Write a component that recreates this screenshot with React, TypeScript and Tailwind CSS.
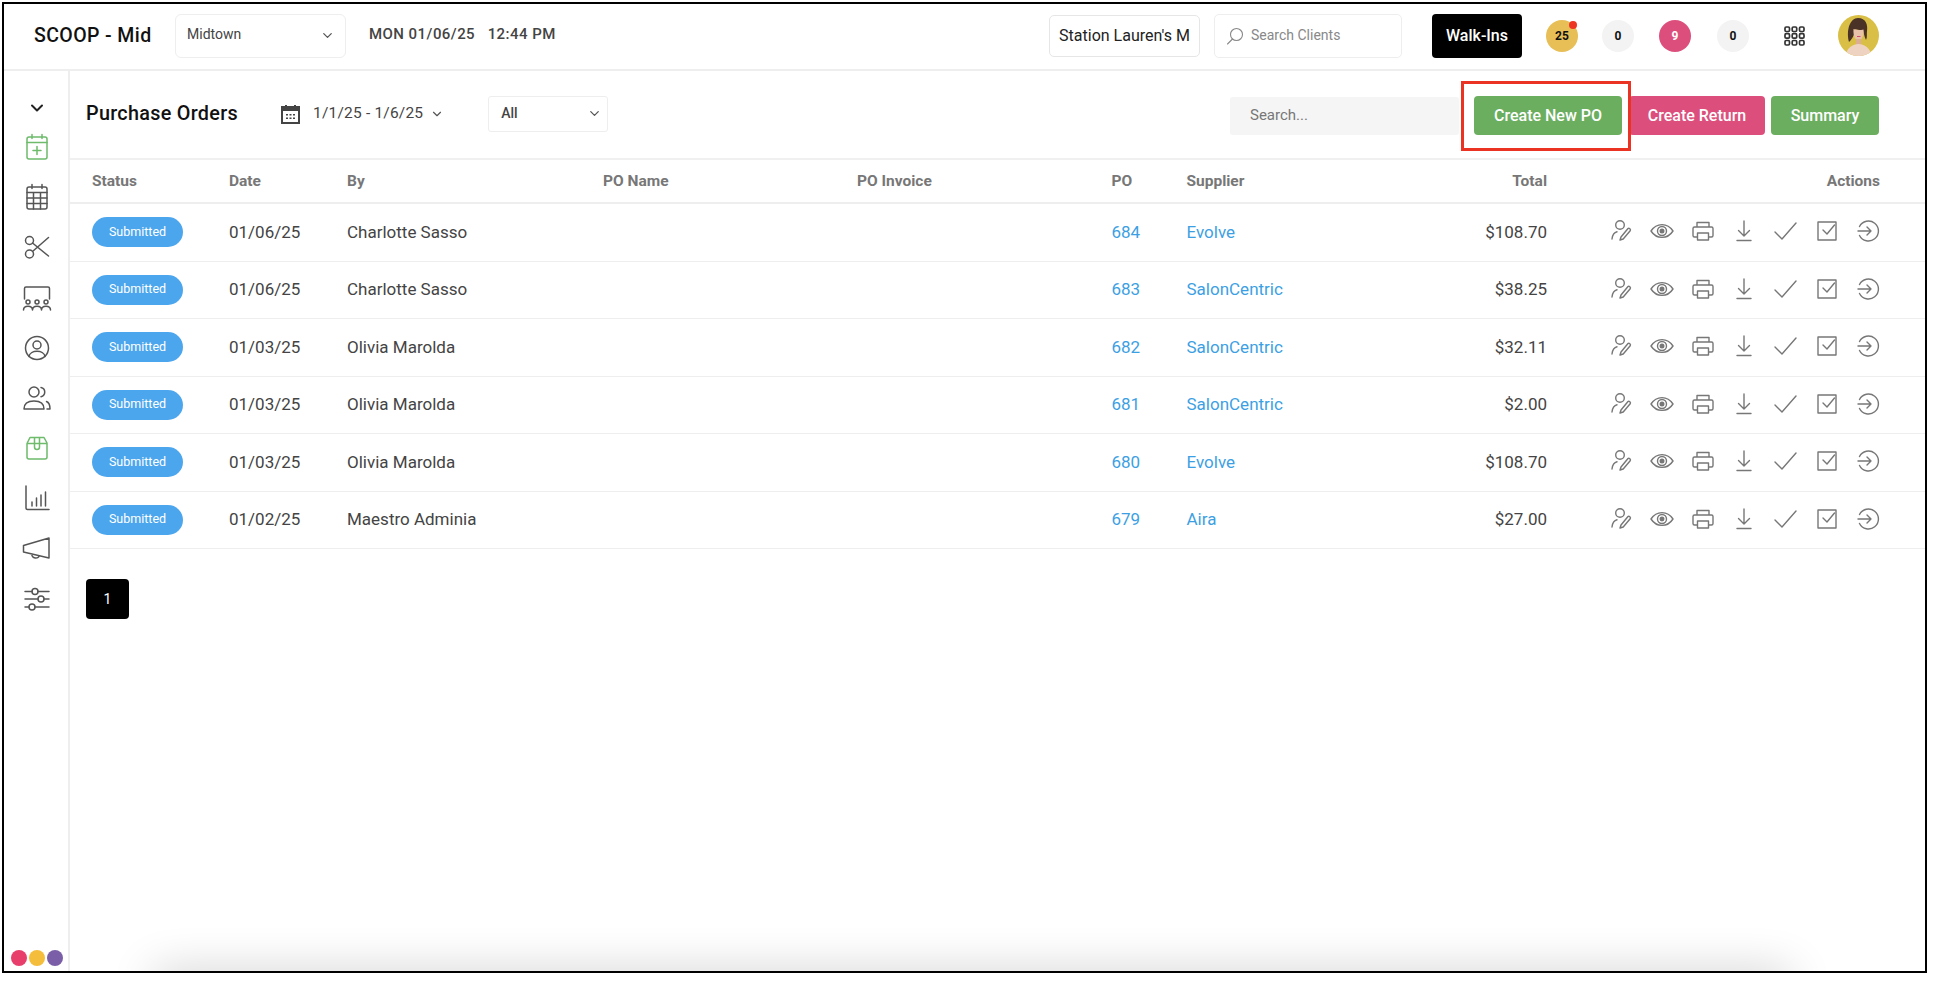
import { ChevronDown } from "lucide-react";

const rows = [
  { date: "01/06/25", by: "Charlotte Sasso", po: "684", supplier: "Evolve", total: "$108.70" },
  { date: "01/06/25", by: "Charlotte Sasso", po: "683", supplier: "SalonCentric", total: "$38.25" },
  { date: "01/03/25", by: "Olivia Marolda", po: "682", supplier: "SalonCentric", total: "$32.11" },
  { date: "01/03/25", by: "Olivia Marolda", po: "681", supplier: "SalonCentric", total: "$2.00" },
  { date: "01/03/25", by: "Olivia Marolda", po: "680", supplier: "Evolve", total: "$108.70" },
  { date: "01/02/25", by: "Maestro Adminia", po: "679", supplier: "Aira", total: "$27.00" },
];

function SideIcon({ children, color = "#555" }: { children: React.ReactNode; color?: string }) {
  return (
    <div className="h-[50.2px] flex items-center justify-center">
      <svg width="32" height="32" viewBox="0 0 32 32" fill="none" stroke={color} strokeWidth="1.5" strokeLinecap="round" strokeLinejoin="round">
        {children}
      </svg>
    </div>
  );
}

function Sidebar() {
  return (
    <aside className="w-[66px] shrink-0 border-r-2 border-[#eeeeee] relative flex flex-col pt-[25px] pl-[2px]">
      <div className="h-[24px] flex items-center justify-center mb-[2px]">
        <ChevronDown size={20} strokeWidth={2.4} color="#222" />
      </div>
      <SideIcon color="#6dbb6b">
        <rect x="6" y="6" width="20" height="22" rx="2" />
        <path d="M6 11.5h20M11 3.5v4M21 3.5v4M16 15.5v8M12 19.5h8" />
      </SideIcon>
      <SideIcon>
        <rect x="6" y="6" width="20" height="22" rx="2" />
        <path d="M6 11.5h20M11 3.5v4M21 3.5v4M6 17h20M6 22.5h20M12.5 11.5V28M19.5 11.5V28" />
      </SideIcon>
      <SideIcon>
        <circle cx="8.5" cy="9.5" r="4" />
        <circle cx="8.5" cy="23" r="4" />
        <path d="M11.5 12L27.5 25M11.5 20.5L27.5 6.5" />
      </SideIcon>
      <SideIcon>
        <path d="M3.5 17V6.5a1.5 1.5 0 0 1 1.5-1.5h22a1.5 1.5 0 0 1 1.5 1.5V17" />
        <circle cx="7" cy="20" r="2" />
        <circle cx="16" cy="20" r="2" />
        <circle cx="25" cy="20" r="2" />
        <path d="M2.5 28c0-5 9-5 9 0M11.5 28c0-5 9-5 9 0M20.5 28c0-5 9-5 9 0" />
      </SideIcon>
      <SideIcon>
        <circle cx="16" cy="16" r="11.5" />
        <circle cx="16" cy="13" r="4" />
        <path d="M8 24.5c1-7 15-7 16 0" />
      </SideIcon>
      <SideIcon>
        <circle cx="13" cy="10" r="5" />
        <path d="M3 27c0-3 .5-8 10-8s10 5 10 8z" />
        <path d="M20 5.5a4.7 4.7 0 0 1 0 9.2M25.5 19.5c2.5 1 3.5 3.5 3.5 7.5h-3" />
      </SideIcon>
      <SideIcon color="#6dbb6b">
        <path d="M6 11.5L9 5.5h14l3 5.5v14a2 2 0 0 1-2 2H8a2 2 0 0 1-2-2zM6 11.5h20M13.5 5.5v9.5a2.5 2.5 0 0 0 5 0V5.5" />
      </SideIcon>
      <SideIcon>
        <path d="M5 4v22a1.5 1.5 0 0 0 1.5 1.5H28M11 24v-4M15.5 24v-8M20 24V13M24.5 24V10" />
      </SideIcon>
      <SideIcon>
        <path d="M2.5 12.5L28 5v20L2.5 19zM11 21c-1 5 7 5 7 2" />
      </SideIcon>
      <SideIcon>
        <path d="M4 8.5h7M17 8.5h11M4 16h13M23 16h5M4 24h4M14 24h14" />
        <circle cx="14" cy="8.5" r="3" />
        <circle cx="20" cy="16" r="3" />
        <circle cx="11" cy="24" r="3" />
      </SideIcon>
      <div className="absolute left-[7px] top-[879px] flex gap-[2px]">
        <span className="w-[16px] h-[16px] rounded-full bg-[#e83e6b]" />
        <span className="w-[16px] h-[16px] rounded-full bg-[#f5bd3c]" />
        <span className="w-[16px] h-[16px] rounded-full bg-[#7b5ea8]" />
      </div>
    </aside>
  );
}

function Avatar() {
  return (
    <svg width="41" height="41" viewBox="0 0 41 41" className="rounded-full">
      <rect width="41" height="41" fill="#d9bf45" />
      <path d="M11 27C8 15 12 3 20 3c8 0 10 7 9 13-.5 3 .5 6-1 9-2-4-2-7-3-10-3 .5-6 0-7.500-1-1 4-2 9-6.500 13z" fill="#4a3226" />
      <path d="M15.5 14c3 1 6 1.500 10 .5.5 6-1.500 11-5 11s-5.500-5.500-5-11.500z" fill="#e9c2aa" />
      <path d="M18 24h5v6h-5z" fill="#dcae96" />
      <path d="M8 41c0-8 7-12 12.500-12S33 33 33 41z" fill="#efd3c2" />
      <path d="M19 21.500h3.500" stroke="#d0506f" strokeWidth="1.200" />
    </svg>
  );
}

function CountDot({ value, className }: { value: string; className: string }) {
  return (
    <div className={`w-[32px] h-[32px] rounded-full flex items-center justify-center text-[12px] font-bold ${className}`}>
      {value}
    </div>
  );
}

function Header() {
  return (
    <header className="h-[67px] shrink-0 border-b-2 border-[#eeeeee] flex items-center pb-[2px]">
      <div className="ml-[30px] w-[141px] text-[19.5px] font-medium text-[#111] tracking-[0.4px] whitespace-nowrap">SCOOP - Mid</div>
      <div className="w-[171px] h-[44px] border border-[#eeeeee] rounded-[6px] flex items-center justify-between pl-[11px] pr-[10px] text-[14px] text-[#444]">
        <span className="mb-[2px]">Midtown</span>
        <ChevronDown size={15} color="#555" />
      </div>
      <div className="ml-[23px] mb-[2px] text-[15px] font-medium text-[#444] tracking-[0.45px] whitespace-pre">MON 01/06/25{"   "}12:44 PM</div>
      <div className="ml-auto w-[151px] h-[42px] border border-[#e6e6e6] rounded-[5px] flex items-center justify-center text-[16px] text-[#222] whitespace-nowrap">
        Station Lauren's M
      </div>
      <div className="ml-[14px] w-[188px] h-[44px] border border-[#eeeeee] rounded-[5px] flex items-center pl-[11px] gap-[7px] text-[14px] text-[#888]">
        <svg width="18" height="18" viewBox="0 0 18 18" fill="none" stroke="#888" strokeWidth="1.1" strokeLinecap="round">
          <circle cx="10.5" cy="7.5" r="6" />
          <path d="M6.5 12L1.5 17" />
        </svg>
        <span>Search Clients</span>
      </div>
      <div className="ml-[30px] w-[90px] h-[44px] bg-black text-white rounded-[4px] flex items-center justify-center text-[16px] font-medium">
        Walk-Ins
      </div>
      <div className="ml-[24px] relative">
        <CountDot value="25" className="bg-[#e8bf57] text-[#111]" />
        <span className="absolute right-[1px] top-[1px] w-[8px] h-[8px] rounded-full bg-[#ee3524]" />
      </div>
      <CountDot value="0" className="ml-[24px] bg-[#f3f3f3] text-[#111]" />
      <CountDot value="9" className="ml-[25px] bg-[#dc4f7d] text-white" />
      <CountDot value="0" className="ml-[26px] bg-[#f3f3f3] text-[#111]" />
      <svg className="ml-[35px]" width="21" height="20" viewBox="0 0 21 20" fill="none" stroke="#333" strokeWidth="1.7">
        <rect x="1" y="1" width="4.5" height="4.5" rx="1.2" />
        <rect x="8.2" y="1" width="4.5" height="4.5" rx="1.2" />
        <rect x="15.5" y="1" width="4.5" height="4.5" rx="1.2" />
        <rect x="1" y="7.7" width="4.5" height="4.5" rx="1.2" />
        <rect x="8.2" y="7.7" width="4.5" height="4.5" rx="1.2" />
        <rect x="15.5" y="7.7" width="4.5" height="4.5" rx="1.2" />
        <rect x="1" y="14.5" width="4.5" height="4.5" rx="1.2" />
        <rect x="8.2" y="14.5" width="4.5" height="4.5" rx="1.2" />
        <rect x="15.5" y="14.5" width="4.5" height="4.5" rx="1.2" />
      </svg>
      <div className="ml-[33px] mr-[46px]"><Avatar /></div>
    </header>
  );
}

function Toolbar() {
  return (
    <div className="h-[89px] shrink-0 border-b-2 border-[#f0f0f0] flex items-center pl-[16px] relative">
      <h1 className="w-[195px] text-[19.8px] font-medium text-[#111] tracking-[0.3px] mb-[2px]">Purchase Orders</h1>
      <svg width="19" height="20" viewBox="0 0 19 20" className="mb-[2px]">
        <path d="M1 3h17v16H1z" fill="none" stroke="#444" strokeWidth="2" />
        <path d="M1 3h17v4H1zM4 1h2v3H4zM13 1h2v3h-2z" fill="#444" />
        <path d="M5 10h2v1.5H5zM8.5 10h2v1.5h-2zM12 10h2v1.5h-2zM5 13.5h2V15H5zM8.5 13.5h2V15h-2zM12 13.5h2V15h-2z" fill="#444" />
      </svg>
      <span className="ml-[13px] text-[15.5px] text-[#444] tracking-[0.2px] mb-[2px]">1/1/25 - 1/6/25</span>
      <ChevronDown className="ml-[7px] mb-[2px]" size={14} color="#555" />
      <div className="ml-[44px] w-[120px] h-[36px] border border-[#eeeeee] rounded-[3px] flex items-center justify-between pl-[12px] pr-[5px] text-[14px] font-medium text-[#444] mb-[2px]">
        <span>All</span>
        <ChevronDown size={15} color="#555" />
      </div>
      <div className="ml-auto w-[229px] h-[38px] bg-[#f5f5f5] rounded-[3px] flex items-center pl-[20px] text-[15px] text-[#777] mr-[15px] mt-[2px]">
        Search...
      </div>
      <button className="w-[148px] h-[39px] mt-[2px] bg-[#6bae5f] text-white text-[16px] font-medium rounded-[4px]">Create New PO</button>
      <button className="ml-[7px] w-[136px] h-[39px] mt-[2px] bg-[#dc4f7d] text-white text-[16px] font-medium rounded-[4px]">Create Return</button>
      <button className="ml-[6px] w-[108px] h-[39px] mt-[2px] bg-[#6bae5f] text-white text-[16px] font-medium rounded-[4px] mr-[46px]">Summary</button>
      <div className="absolute left-[1391px] top-[10px] w-[170px] h-[70px] border-[3px] border-[#ea3323]" />
    </div>
  );
}

const actionIcons = [
  <>
    <circle cx="12" cy="6" r="4.3" />
    <path d="M4 20c.5-4 2-6.5 5-7.2M13 18l7-8.500c1-1 3.200 1 2.200 2.200l-7 8.300-3.200 1z" />
  </>,
  <>
    <path d="M1 12c5.500-8.500 16.500-8.500 22 0-5.500 8.500-16.500 8.500-22 0z" />
    <circle cx="12" cy="12" r="4.500" />
    <circle cx="12" cy="12" r="1.800" fill="#777" />
  </>,
  <>
    <path d="M6 8V3.500h12V8M6 18H3.500A1.500 1.500 0 0 1 2 16.500v-7A1.500 1.500 0 0 1 3.500 8h17A1.500 1.500 0 0 1 22 9.500v7a1.500 1.500 0 0 1-1.500 1.500H18" />
    <rect x="6.500" y="14" width="11" height="7" />
  </>,
  <path d="M12 2v15M6.500 11.500L12 17l5.500-5.500M5 21.500h14" />,
  <path d="M2 13l7 7L23 4" />,
  <>
    <rect x="3" y="3" width="18" height="18" />
    <path d="M8 11l4 4 7.500-9" />
  </>,
  <>
    <path d="M3.500 7.500a10 10 0 1 1 0 9" />
    <path d="M2 12h13M11 8l4 4-4 4" />
  </>,
];

function ActionIcons() {
  return (
    <div className="flex justify-end gap-[17.3px] mb-[2px]">
      {actionIcons.map((icon, i) => (
        <svg key={i} width="24" height="24" viewBox="0 0 24 24" fill="none" stroke="#777" strokeWidth="1.4" strokeLinecap="round" strokeLinejoin="round">
          {icon}
        </svg>
      ))}
    </div>
  );
}

const gridCols = "grid grid-cols-[137px_118px_256px_254px_254.5px_75px_180px_180.5px_333px] pl-[22px] items-center";

function OrdersTable() {
  return (
    <div>
      <div className={`${gridCols} h-[44px] pt-[2px] border-b-2 border-[#eeeeee] text-[15.5px] font-bold text-[#777]`}>
        <div>Status</div>
        <div>Date</div>
        <div>By</div>
        <div>PO Name</div>
        <div>PO Invoice</div>
        <div>PO</div>
        <div>Supplier</div>
        <div className="text-right">Total</div>
        <div className="text-right">Actions</div>
      </div>
      {rows.map((row) => (
        <div key={row.po} className={`${gridCols} h-[57.5px] border-b border-[#eeeeee] text-[17px] text-[#444]`}>
          <div>
            <span className="w-[91px] h-[30px] rounded-full bg-[#4ca6ee] text-white text-[12.5px] flex items-center justify-center">Submitted</span>
          </div>
          <div>{row.date}</div>
          <div>{row.by}</div>
          <div />
          <div />
          <div className="text-[#3d9fe3]">{row.po}</div>
          <div className="text-[#3d9fe3]">{row.supplier}</div>
          <div className="text-right">{row.total}</div>
          <ActionIcons />
        </div>
      ))}
    </div>
  );
}

export default function App() {
  return (
    <div className="w-[1934px] h-[984px] bg-white pt-[2px] pl-[2px] overflow-hidden" style={{ fontFamily: "Roboto, sans-serif" }}>
      <div className="w-[1925px] h-[971px] border-2 border-black flex flex-col relative overflow-hidden">
        <Header />
        <div className="flex flex-1 min-h-0">
          <Sidebar />
          <main className="flex-1 min-w-0">
            <Toolbar />
            <OrdersTable />
            <div className="ml-[16px] mt-[30px] w-[43px] h-[40px] bg-black rounded-[4px] text-white text-[14px] flex items-center justify-center">1</div>
          </main>
        </div>
        <div className="absolute left-[150px] right-[135px] bottom-[-30px] h-[30px] shadow-[0_0_45px_rgba(0,0,0,0.2)]" />
      </div>
    </div>
  );
}
